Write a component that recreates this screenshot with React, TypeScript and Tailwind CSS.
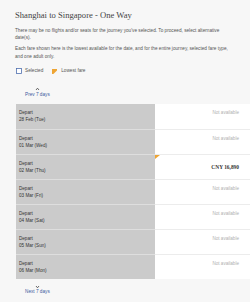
const rows = [
  { date: "28 Feb (Tue)", fare: null },
  { date: "01 Mar (Wed)", fare: null },
  { date: "02 Mar (Thu)", fare: "CNY 16,890", lowest: true },
  { date: "03 Mar (Fri)", fare: null },
  { date: "04 Mar (Sat)", fare: null },
  { date: "05 Mar (Sun)", fare: null },
  { date: "06 Mar (Mon)", fare: null },
];

function Chevron({ up = false }: { up?: boolean }) {
  return (
    <svg width="5" height="4" viewBox="0 0 5 4" className="block">
      <polyline
        points={up ? "1,3 2.5,1.2 4,3" : "1,1 2.5,2.8 4,1"}
        fill="none"
        stroke="#444"
        strokeWidth="0.8"
      />
    </svg>
  );
}

function FareFlag({ className = "" }: { className?: string }) {
  return (
    <svg width="5" height="5" viewBox="0 0 5 5" className={className}>
      <polygon points="0,0 5,0 5,1.4 1.4,5 0,5" fill="#eea534" />
    </svg>
  );
}

export default function App() {
  return (
    <div className="w-[250px] h-[302px] overflow-hidden bg-[#f7f7f7] font-['Liberation_Sans',sans-serif] text-[#444]">
      <div className="pl-[15px] pt-[10px]">
        <h1 className="font-['Liberation_Serif',serif] text-[8.6px] leading-[10px] text-[#444]">
          Shanghai to Singapore - One Way
        </h1>
        <p className="mt-[7px] pr-[20px] text-[4.7px] leading-[7px] text-[#555]">
          There may be no flights and/or seats for the journey you've selected. To proceed, select alternative date(s).
        </p>
        <p className="mt-[4px] pr-[17px] text-[4.7px] leading-[7.5px] text-[#555]">
          Each fare shown here is the lowest available for the date, and for the entire journey, selected fare type, and one adult only.
        </p>

        <div className="mt-[8px] flex items-center h-[6px] text-[4.7px] text-[#555]">
          <svg width="6" height="6" viewBox="0 0 6 6" className="ml-[1px]">
            <rect x="0.5" y="0.5" width="5" height="5" fill="#fff" stroke="#4f6fae" strokeWidth="0.8" />
          </svg>
          <span className="ml-[3px]">Selected</span>
          <FareFlag className="ml-[9px]" />
          <span className="ml-[4px]">Lowest fare</span>
        </div>

        <button className="mt-[12px] ml-[10px] flex flex-col items-center text-[4.7px] leading-[6px] text-[#3d5a9e]">
          <span className="h-[6px] flex items-center">
            <Chevron up />
          </span>
          <span>Prev 7 days</span>
        </button>

        <div className="mt-[6px] ml-[1px]">
          {rows.map((r, i) => (
            <div key={r.date} className="flex h-[25px]">
              <div
                className={`w-[139px] bg-[#cbcbcb] pl-[3px] pt-[6px] text-[4.6px] leading-[6.5px] text-[#333] ${
                  i > 0 ? "border-t border-[#dedede]" : ""
                }`}
              >
                <div>Depart</div>
                <div>{r.date}</div>
              </div>
              <div
                className={`relative flex-1 bg-white flex justify-end pr-[11px] ${
                  i > 0 ? "border-t border-[#ececec]" : ""
                } ${r.fare ? "items-center" : "pt-[6px]"}`}
              >
                {r.lowest && (
                  <svg width="5" height="4" viewBox="0 0 5 4" className="absolute left-0 top-0">
                    <polygon points="0,0 5,0 0,4" fill="#eea534" />
                  </svg>
                )}
                {r.fare ? (
                  <span className="font-['Liberation_Serif',serif] font-bold text-[5.4px] text-[#333]">
                    {r.fare}
                  </span>
                ) : (
                  <span className="text-[4.6px] leading-[6.5px] text-[#b0b0b0]">Not available</span>
                )}
              </div>
            </div>
          ))}
        </div>

        <button className="mt-[5px] ml-[10px] flex flex-col items-center text-[4.7px] leading-[6px] text-[#3d5a9e]">
          <span className="h-[5px] flex items-center">
            <Chevron />
          </span>
          <span>Next 7 days</span>
        </button>
      </div>
    </div>
  );
}
